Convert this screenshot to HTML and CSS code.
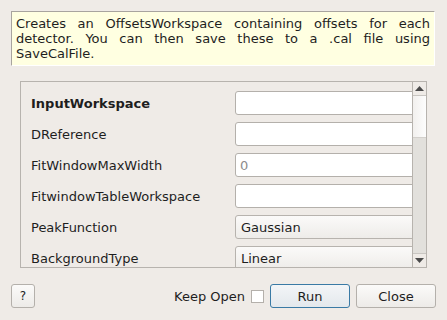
FILE: index.html
```
<!DOCTYPE html>
<html>
<head>
<meta charset="utf-8">
<link rel="stylesheet" href="styles.css">
</head>
<body>
<div class="dialog">
  <div class="desc">Creates an OffsetsWorkspace containing offsets for each detector. You can then save these to a .cal file using SaveCalFile.</div>
  <div class="frame">
    <div class="viewport">
      <div class="form">
        <div class="label bold">InputWorkspace</div>
        <div class="field"><div class="input"></div></div>
        <div class="label">DReference</div>
        <div class="field"><div class="input"></div></div>
        <div class="label">FitWindowMaxWidth</div>
        <div class="field"><div class="input"><span class="ph">0</span></div></div>
        <div class="label">FitwindowTableWorkspace</div>
        <div class="field"><div class="input"></div></div>
        <div class="label">PeakFunction</div>
        <div class="field"><div class="combo">Gaussian</div></div>
        <div class="label">BackgroundType</div>
        <div class="field"><div class="combo">Linear</div></div>
      </div>
    </div>
    <div class="scrollbar">
      <div class="sb-btn"><svg width="9" height="5" viewBox="0 0 9 5"><path d="M0 5 L4.5 0 L9 5 Z" fill="#4a4a4a"/></svg></div>
      <div class="sb-handle"></div>
      <div class="sb-track"></div>
      <div class="sb-btn sb-down"><svg width="9" height="5" viewBox="0 0 9 5"><path d="M0 0 L4.5 5 L9 0 Z" fill="#4a4a4a"/></svg></div>
    </div>
  </div>
  <div class="footer">
    <div class="btn help">?</div>
    <div class="spacer"></div>
    <div class="keep">Keep Open</div>
    <div class="check"></div>
    <div class="btn run">Run</div>
    <div class="btn close">Close</div>
  </div>
</div>
</body>
</html>
```
FILE: styles.css
```
html, body {
  margin: 0;
  padding: 0;
}
body {
  width: 447px;
  height: 320px;
  overflow: hidden;
  background: #efebe7;
  font-family: "DejaVu Sans", sans-serif;
  font-size: 13px;
  color: #1a1a1a;
}
.dialog {
  padding-top: 11px;
}
.desc {
  margin: 0 12px 0 11px;
  background: #ffffe1;
  border-top: 1px solid #a8a49f;
  border-left: 1px solid #a8a49f;
  border-right: 1px solid #ffffff;
  border-bottom: 1px solid #ffffff;
  padding: 4px 4px 4px 4px;
  line-height: 15px;
  text-align: justify;
  color: #1e1e1e;
}
.frame {
  margin: 15px 20px 0 20px;
  height: 187px;
  box-sizing: border-box;
  border: 1px solid #b7b3ae;
  display: flex;
}
.viewport {
  flex: 1;
  overflow: hidden;
  padding: 9px 0 0 10px;
}
.form {
  display: grid;
  grid-template-columns: 194px 220px;
  grid-auto-rows: 24px;
  column-gap: 10px;
  row-gap: 7px;
}
.label {
  display: flex;
  align-items: center;
  white-space: nowrap;
  color: #1e1e1e;
}
.bold {
  font-weight: bold;
}
.field {
  display: flex;
}
.input {
  flex: 1;
  box-sizing: border-box;
  height: 24px;
  background: #ffffff;
  border: 1px solid #b4b0ab;
  border-radius: 3px;
  display: flex;
  align-items: center;
  padding-left: 4px;
}
.ph {
  color: #8c8c8c;
}
.combo {
  flex: 1;
  box-sizing: border-box;
  height: 24px;
  background: linear-gradient(#fbfaf9, #eeece9);
  border: 1px solid #b7b3ae;
  border-radius: 3px;
  display: flex;
  align-items: center;
  padding-left: 5px;
  color: #1e1e1e;
}
.scrollbar {
  width: 13px;
  border-left: 1px solid #b7b3ae;
  display: flex;
  flex-direction: column;
}
.sb-btn {
  height: 13px;
  border-bottom: 1px solid #c9c6c2;
  background: #efebe7;
  display: flex;
  align-items: center;
  justify-content: center;
}
.sb-down {
  border-bottom: none;
  border-top: 1px solid #c9c6c2;
}
.sb-handle {
  height: 42px;
  box-sizing: border-box;
  background: linear-gradient(to right, #f2f0ee, #fdfdfd);
  border-bottom: 1px solid #d3d0cc;
}
.sb-track {
  flex: 1;
  background: #e2e0dc;
}
.footer {
  margin-top: 16px;
  padding: 0 11px;
  display: flex;
  align-items: center;
}
.spacer {
  flex: 1;
}
.btn {
  box-sizing: border-box;
  height: 24px;
  border: 1px solid #b4b0ab;
  border-radius: 3px;
  background: linear-gradient(#fbfaf9, #edebe8);
  display: flex;
  align-items: center;
  justify-content: center;
  color: #1e1e1e;
}
.help {
  width: 24px;
  font-size: 12px;
}
.keep {
  margin-right: 6px;
  color: #1e1e1e;
}
.check {
  width: 13px;
  height: 13px;
  box-sizing: border-box;
  background: #ffffff;
  border: 1px solid #b4b0ab;
  margin-right: 6px;
}
.run {
  width: 80px;
  border-color: #3a7aa5;
  background: linear-gradient(#f3f5f7, #e3e8ec);
  margin-right: 6px;
}
.close {
  width: 80px;
}
```
